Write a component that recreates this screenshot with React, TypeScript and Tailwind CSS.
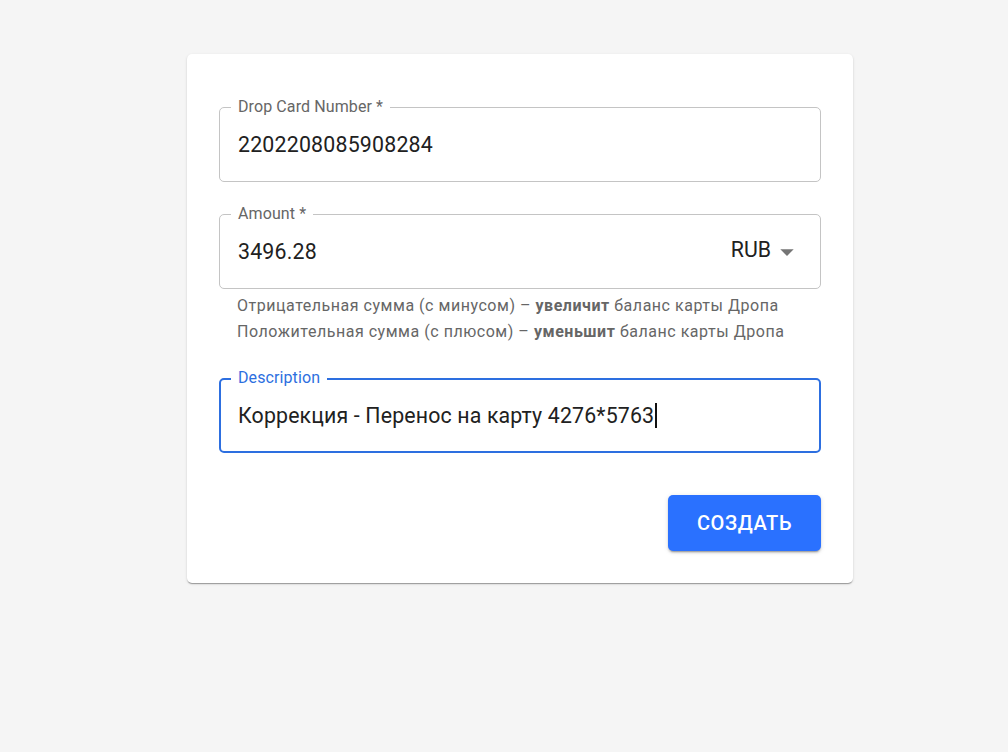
import React from "react";

const font = { fontFamily: "Roboto, 'Noto Sans', sans-serif" };

function Field({
  label,
  focused = false,
  children,
}: {
  label: string;
  focused?: boolean;
  children: React.ReactNode;
}) {
  return (
    <div
      className={
        "relative h-[75px] rounded-[5px] flex items-center " +
        (focused ? "border-2 border-[#2d6fe0]" : "border border-[#c4c4c4]")
      }
    >
      <span
        className={
          "absolute bg-white px-[7px] text-[16px] leading-[23px] tracking-[0.1px] " +
          (focused ? "text-[#2d6fe0] left-[10px] top-[-14px]" : "text-[#666666] left-[11px] top-[-13px]")
        }
      >
        {label}
      </span>
      {children}
    </div>
  );
}

export default function App() {
  return (
    <div className="min-h-[752px] bg-[#f5f5f5] pt-[54px]" style={font}>
      <div className="ml-[187px] w-[666px] bg-white rounded-[5px] shadow-[0_2px_1px_-1px_rgba(0,0,0,0.2),0_1px_1px_0_rgba(0,0,0,0.14),0_1px_3px_0_rgba(0,0,0,0.12)] px-8 pt-[53px] pb-8">
        {/* Card number */}
        <Field label="Drop Card Number *">
          <span className="pl-[18px] text-[21.33px] text-[#212121] tracking-[0.2px]">
            2202208085908284
          </span>
        </Field>

        {/* Amount */}
        <div className="mt-8">
          <Field label="Amount *">
            <span className="pl-[18px] flex-1 text-[21.33px] text-[#212121] tracking-[0.2px]">
              3496.28
            </span>
            <span className="text-[21.33px] text-[#212121] -mt-[3px]">RUB</span>
            <svg viewBox="0 0 24 24" className="w-8 h-8 mr-[17px]" fill="#757575">
              <path d="M7 10l5 5 5-5z" />
            </svg>
          </Field>
          <div className="mt-1 ml-[18px] text-[16px] leading-[26px] text-[#666666] tracking-[0.53px]">
            <div>
              Отрицательная сумма (с минусом) – <b className="font-bold">увеличит</b> баланс карты Дропа
            </div>
            <div>
              Положительная сумма (с плюсом) – <b className="font-bold">уменьшит</b> баланс карты Дропа
            </div>
          </div>
        </div>

        {/* Description */}
        <div className="mt-[33px]">
          <Field label="Description" focused>
            <span className="pl-[17px] text-[21.33px] text-[#212121] tracking-[0.15px] flex items-center">
              Коррекция - Перенос на карту 4276*5763
              <span className="inline-block w-[1.5px] h-[25px] bg-[#111111] ml-[1px]" />
            </span>
          </Field>
        </div>

        {/* Submit */}
        <div className="flex justify-end mt-[42px]">
          <button className="w-[153px] h-[56px] rounded-[5px] bg-[#2a71ff] text-white text-[20px] font-medium tracking-[0.6px] shadow-[0_3px_1px_-2px_rgba(0,0,0,0.2),0_2px_2px_0_rgba(0,0,0,0.14),0_1px_5px_0_rgba(0,0,0,0.12)]">
            СОЗДАТЬ
          </button>
        </div>
      </div>
    </div>
  );
}
